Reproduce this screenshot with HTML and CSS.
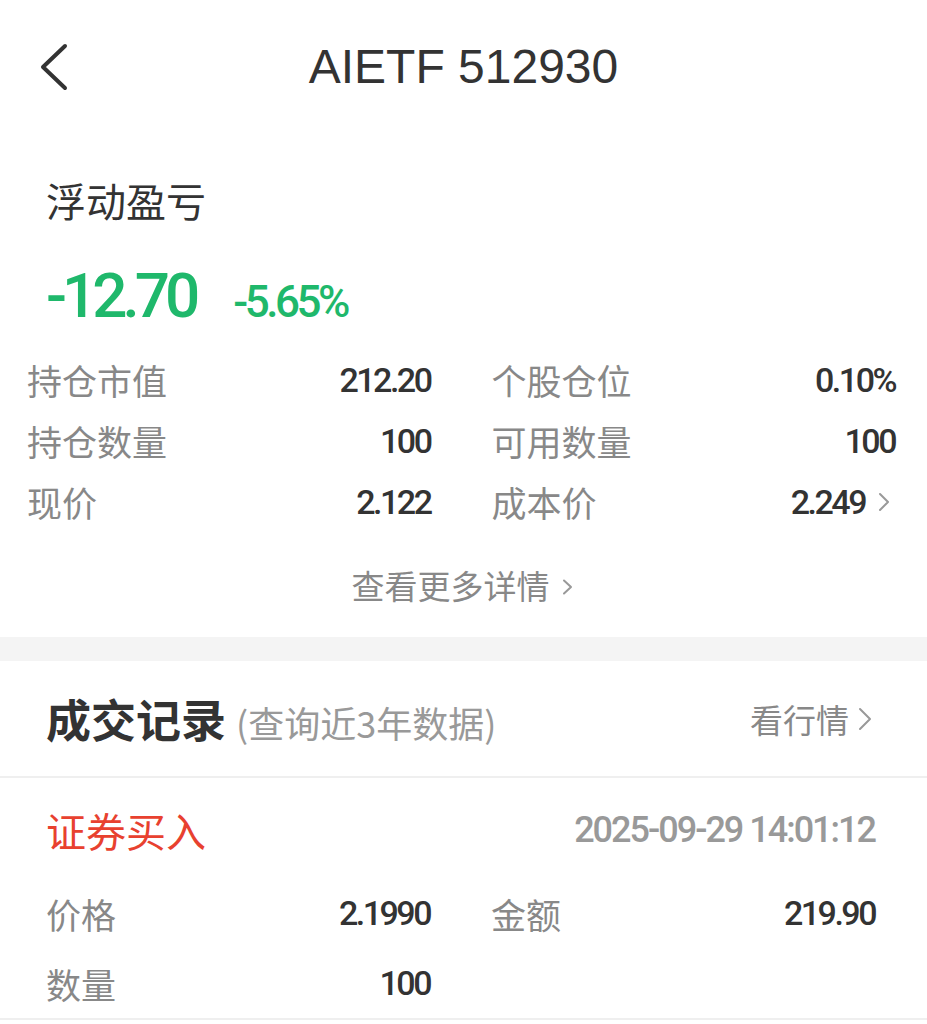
FILE: index.html
```html
<!DOCTYPE html>
<html lang="zh-CN">

<head>
    <meta charset="UTF-8">
    <meta name="viewport" content="width=device-width, initial-scale=1.0">
    <title>AIETF 512930</title>
    <link rel="stylesheet" href="styles.css">
</head>

<body>
    <div class="header">
        <span class="back">
            <svg width="30" height="48" viewBox="0 0 30 48">
                <polyline points="25,3 3,24 25,45" fill="none" stroke="#333" stroke-width="4"
                    stroke-linecap="round" stroke-linejoin="round" />
            </svg>
        </span>
        <h1>AIETF 512930</h1>
    </div>

    <div class="position">
        <div class="pl-title">浮动盈亏</div>
        <div class="pl-values">
            <span class="pl-amount num">-12.70</span>
            <span class="pl-rate num">-5.65%</span>
        </div>
        <div class="stats">
            <div class="stat">
                <span class="label">持仓市值</span>
                <span class="value num">212.20</span>
            </div>
            <div class="stat">
                <span class="label">个股仓位</span>
                <span class="value num">0.10%</span>
            </div>
            <div class="stat">
                <span class="label">持仓数量</span>
                <span class="value num">100</span>
            </div>
            <div class="stat">
                <span class="label">可用数量</span>
                <span class="value num">100</span>
            </div>
            <div class="stat">
                <span class="label">现价</span>
                <span class="value num">2.122</span>
            </div>
            <div class="stat">
                <span class="label">成本价</span>
                <span class="value num with-arrow">2.249
                    <svg class="arrow" width="12" height="20" viewBox="0 0 12 20">
                        <polyline points="2,2 10,10 2,18" fill="none" stroke="#999" stroke-width="2"
                            stroke-linecap="round" stroke-linejoin="round" />
                    </svg>
                </span>
            </div>
        </div>
        <div class="more">查看更多详情
            <svg class="arrow" width="11" height="16" viewBox="0 0 11 16">
                <polyline points="2,1.5 9,8 2,14.5" fill="none" stroke="#999" stroke-width="2"
                    stroke-linecap="round" stroke-linejoin="round" />
            </svg>
        </div>
    </div>

    <div class="gap"></div>

    <div class="records">
        <div class="records-head">
            <div class="records-title">成交记录<span class="hint">(查询近3年数据)</span></div>
            <div class="quote">看行情
                <svg class="arrow" width="16" height="24" viewBox="0 0 16 24">
                    <polyline points="3,2 13,12 3,22" fill="none" stroke="#999" stroke-width="2"
                        stroke-linecap="round" stroke-linejoin="round" />
                </svg>
            </div>
        </div>
        <div class="trade">
            <div class="trade-top">
                <span class="trade-type">证券买入</span>
                <span class="trade-time num">2025-09-29 14:01:12</span>
            </div>
            <div class="trade-grid">
                <div class="stat">
                    <span class="label">价格</span>
                    <span class="value num">2.1990</span>
                </div>
                <div class="stat">
                    <span class="label">金额</span>
                    <span class="value num">219.90</span>
                </div>
                <div class="stat">
                    <span class="label">数量</span>
                    <span class="value num">100</span>
                </div>
            </div>
        </div>
    </div>
</body>

</html>
```

FILE: styles.css
```css
body {
    margin: 0;
    padding: 0;
    background-color: #fff;
    color: #333;
    font-family: "Noto Sans CJK SC", "Noto Sans", sans-serif;
}

.num {
    font-family: Roboto, "Noto Sans CJK SC", sans-serif;
    font-weight: 500;
}

.arrow {
    display: inline-block;
}

.header {
    height: 132px;
    display: flex;
    align-items: center;
    justify-content: center;
    position: relative;
}

.header .back {
    position: absolute;
    left: 40px;
    top: 43px;
}

.header h1 {
    margin: 0;
    font-family: "Liberation Sans", Arial, sans-serif;
    font-weight: normal;
    font-size: 48px;
    color: #333;
}

.position {
    padding: 0 30px 0 27px;
}

.pl-title {
    padding-left: 19px;
    margin-top: 42px;
    font-size: 40px;
    line-height: 52px;
    color: #333;
}

.pl-values {
    padding-left: 19px;
    display: flex;
    align-items: baseline;
    gap: 38px;
    margin-top: 39px;
    height: 62px;
}

.pl-amount {
    font-size: 62px;
    letter-spacing: -5px;
    color: #1fb86b;
    line-height: 62px;
}

.pl-rate {
    font-size: 44px;
    letter-spacing: -3.5px;
    color: #1fb86b;
}

.stats {
    display: grid;
    grid-template-columns: 1fr 1fr;
    column-gap: 59px;
    margin-top: 22px;
}

.stat {
    display: flex;
    justify-content: space-between;
    align-items: center;
    height: 61px;
}

.label {
    font-size: 35px;
    color: #888;
}

.value {
    font-size: 34px;
    letter-spacing: -2.5px;
    margin-right: 2px;
    color: #333;
}

.with-arrow {
    display: flex;
    align-items: center;
    margin-right: 7px;
}

.with-arrow .arrow {
    margin-left: 13px;
}

.more {
    display: flex;
    align-items: center;
    justify-content: center;
    font-size: 33px;
    color: #888;
    padding: 29px 0 28px;
    height: 48px;
}

.more .arrow {
    margin-left: 12px;
    margin-top: 3px;
}

.gap {
    height: 24px;
    background-color: #f4f4f4;
}

.records-head {
    display: flex;
    justify-content: space-between;
    align-items: center;
    height: 115px;
    padding: 0 54px 0 46px;
    border-bottom: 2px solid #efefef;
}

.records-title {
    font-size: 45px;
    font-weight: bold;
    color: #333;
}

.hint {
    font-size: 36px;
    font-weight: normal;
    color: #999;
    margin-left: 10px;
}

.quote {
    display: flex;
    align-items: center;
    font-size: 33px;
    color: #888;
}

.quote .arrow {
    margin-left: 8px;
}

.trade {
    padding: 17px 50px 0 46px;
    border-bottom: 2px solid #efefef;
}

.trade-top {
    display: flex;
    justify-content: space-between;
    align-items: center;
    height: 70px;
}

.trade-type {
    font-size: 40px;
    color: #e8412f;
}

.trade-time {
    font-size: 36px;
    letter-spacing: -2px;
    margin-right: 2px;
    color: #999;
}

.trade-grid {
    display: grid;
    grid-template-columns: 386px 1fr;
    column-gap: 59px;
    padding: 13px 0 0;
}

.trade-grid .stat {
    height: 70px;
}
```
